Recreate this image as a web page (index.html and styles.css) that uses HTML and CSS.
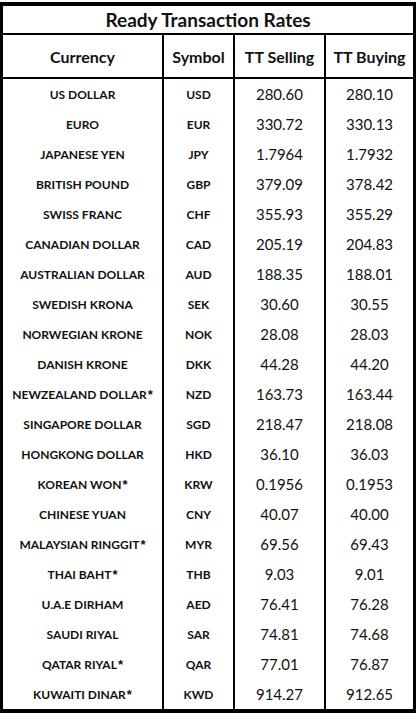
FILE: index.html
```html
<!DOCTYPE html>
<html>
<head>
<meta charset="utf-8">
<link rel="stylesheet" href="styles.css">
</head>
<body>
<table class="rates">
  <colgroup>
    <col class="c-name">
    <col class="c-sym">
    <col class="c-sell">
    <col class="c-buy">
  </colgroup>
  <thead>
    <tr class="title-row"><th colspan="4" class="title">Ready Transaction Rates</th></tr>
    <tr class="head-row">
      <th>Currency</th>
      <th class="sep">Symbol</th>
      <th class="sep">TT Selling</th>
      <th class="sep">TT Buying</th>
    </tr>
  </thead>
  <tbody>
    <tr><td class="name">US DOLLAR</td><td class="sym sep">USD</td><td class="num sep">280.60</td><td class="num sep">280.10</td></tr>
    <tr><td class="name">EURO</td><td class="sym sep">EUR</td><td class="num sep">330.72</td><td class="num sep">330.13</td></tr>
    <tr><td class="name">JAPANESE YEN</td><td class="sym sep">JPY</td><td class="num sep">1.7964</td><td class="num sep">1.7932</td></tr>
    <tr><td class="name">BRITISH POUND</td><td class="sym sep">GBP</td><td class="num sep">379.09</td><td class="num sep">378.42</td></tr>
    <tr><td class="name">SWISS FRANC</td><td class="sym sep">CHF</td><td class="num sep">355.93</td><td class="num sep">355.29</td></tr>
    <tr><td class="name">CANADIAN DOLLAR</td><td class="sym sep">CAD</td><td class="num sep">205.19</td><td class="num sep">204.83</td></tr>
    <tr><td class="name">AUSTRALIAN DOLLAR</td><td class="sym sep">AUD</td><td class="num sep">188.35</td><td class="num sep">188.01</td></tr>
    <tr><td class="name">SWEDISH KRONA</td><td class="sym sep">SEK</td><td class="num sep">30.60</td><td class="num sep">30.55</td></tr>
    <tr><td class="name">NORWEGIAN KRONE</td><td class="sym sep">NOK</td><td class="num sep">28.08</td><td class="num sep">28.03</td></tr>
    <tr><td class="name">DANISH KRONE</td><td class="sym sep">DKK</td><td class="num sep">44.28</td><td class="num sep">44.20</td></tr>
    <tr><td class="name">NEWZEALAND DOLLAR<span class="star">*</span></td><td class="sym sep">NZD</td><td class="num sep">163.73</td><td class="num sep">163.44</td></tr>
    <tr><td class="name">SINGAPORE DOLLAR</td><td class="sym sep">SGD</td><td class="num sep">218.47</td><td class="num sep">218.08</td></tr>
    <tr><td class="name">HONGKONG DOLLAR</td><td class="sym sep">HKD</td><td class="num sep">36.10</td><td class="num sep">36.03</td></tr>
    <tr><td class="name">KOREAN WON<span class="star">*</span></td><td class="sym sep">KRW</td><td class="num sep">0.1956</td><td class="num sep">0.1953</td></tr>
    <tr><td class="name">CHINESE YUAN</td><td class="sym sep">CNY</td><td class="num sep">40.07</td><td class="num sep">40.00</td></tr>
    <tr><td class="name">MALAYSIAN RINGGIT<span class="star">*</span></td><td class="sym sep">MYR</td><td class="num sep">69.56</td><td class="num sep">69.43</td></tr>
    <tr><td class="name">THAI BAHT<span class="star">*</span></td><td class="sym sep">THB</td><td class="num sep">9.03</td><td class="num sep">9.01</td></tr>
    <tr><td class="name">U.A.E DIRHAM</td><td class="sym sep">AED</td><td class="num sep">76.41</td><td class="num sep">76.28</td></tr>
    <tr><td class="name">SAUDI RIYAL</td><td class="sym sep">SAR</td><td class="num sep">74.81</td><td class="num sep">74.68</td></tr>
    <tr><td class="name">QATAR RIYAL<span class="star">*</span></td><td class="sym sep">QAR</td><td class="num sep">77.01</td><td class="num sep">76.87</td></tr>
    <tr><td class="name">KUWAITI DINAR<span class="star">*</span></td><td class="sym sep">KWD</td><td class="num sep">914.27</td><td class="num sep">912.65</td></tr>
  </tbody>
</table>
</body>
</html>
```
FILE: styles.css
```css
html, body {
  margin: 0;
  padding: 0;
  background: #fff;
}
body {
  font-family: Lato, "Liberation Sans", sans-serif;
  color: #111;
}
.rates {
  margin-top: 2px;
  width: 416px;
  table-layout: fixed;
  border-collapse: separate;
  border-spacing: 0;
  border-style: solid;
  border-color: #000;
  border-width: 4px 3px 4px 3px;
  box-sizing: border-box;
}
.c-name { width: 159px; }
.c-sym { width: 71px; }
.c-sell { width: 91px; }
.c-buy { width: 89px; }
th, td {
  padding: 0;
  text-align: center;
  box-sizing: border-box;
  white-space: nowrap;
}
.sep {
  border-left: 2px solid #000;
}
.title-row th {
  height: 29px;
  font-size: 19px;
  font-weight: 700;
  border-bottom: 2px solid #000;
}
.head-row th {
  height: 44px;
  font-size: 16px;
  font-weight: 700;
  border-bottom: 2px solid #000;
}
tbody td {
  height: 30px;
}
.name, .sym {
  font-size: 12px;
  font-weight: 700;
}
.star {
  font-family: "Liberation Sans", sans-serif;
  font-size: 13px;
  font-weight: 700;
  margin-left: 1px;
}
.num {
  font-size: 15px;
  font-weight: 400;
}
```
